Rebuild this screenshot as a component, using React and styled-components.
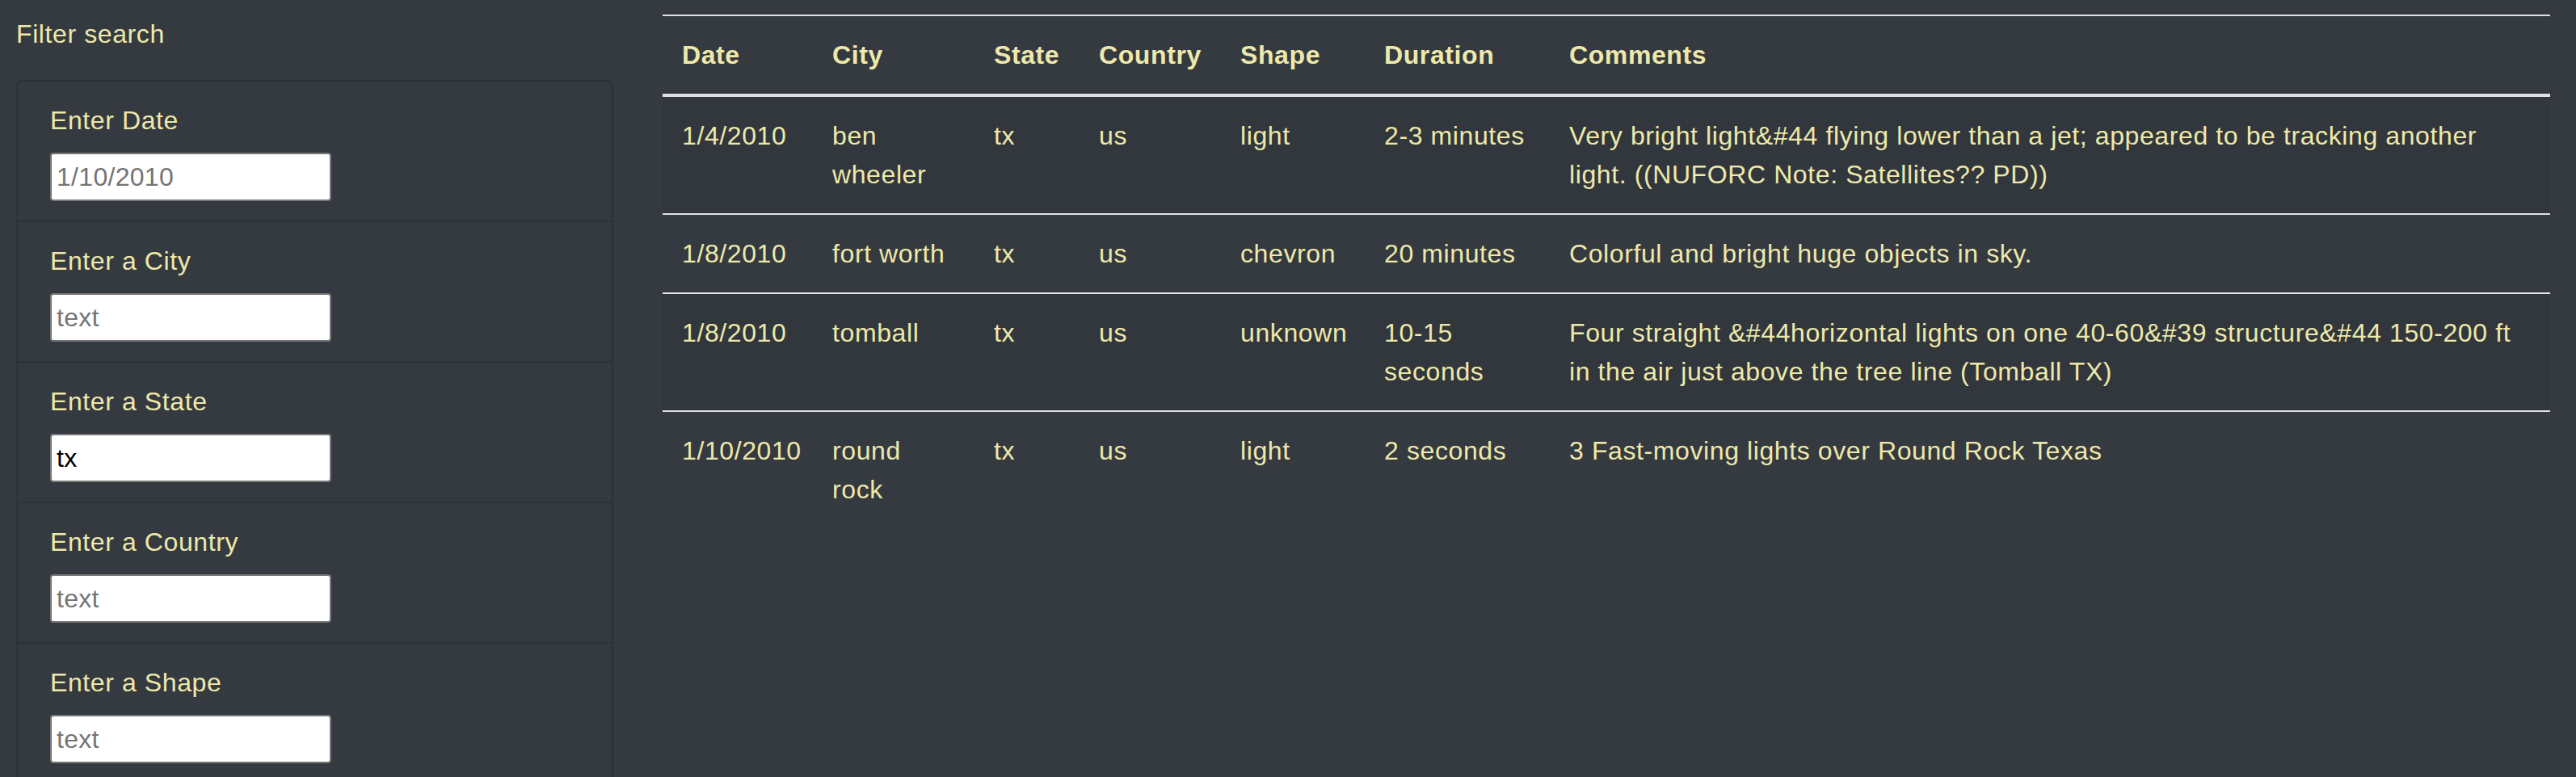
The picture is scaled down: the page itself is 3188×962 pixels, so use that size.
import React from "react";
import styled, { createGlobalStyle } from "styled-components";

const GlobalStyle = createGlobalStyle`
  html, body {
    margin: 0;
    padding: 0;
    background: #343a40;
  }
  body {
    font-family: "Liberation Sans", Arial, sans-serif;
    color: #eee8aa;
    font-size: 32px;
    line-height: 48px;
    letter-spacing: 0.6px;
  }
  * { box-sizing: border-box; }
`;

const Page = styled.div`
  display: flex;
  align-items: flex-start;
  padding-top: 18px;
  min-height: 962px;
`;

const Sidebar = styled.aside`
  width: 739px;
  margin-left: 20px;
  flex-shrink: 0;
`;

const SideTitle = styled.div`
  font-size: 32px;
  line-height: 48px;
  margin: 0 0 33px 0;
`;

const Card = styled.ul`
  list-style: none;
  margin: 0;
  padding: 0;
  border: 2px solid rgba(0, 0, 0, 0.125);
  border-radius: 8px;
`;

const Item = styled.li`
  padding: 24px 40px;
  display: flex;
  flex-direction: column;
  align-items: flex-start;
  & + & {
    border-top: 2px solid rgba(0, 0, 0, 0.125);
  }
`;

const Label = styled.label`
  display: block;
  line-height: 48px;
  margin-bottom: 16px;
`;

const Input = styled.input`
  width: 348px;
  height: 60px;
  border: 2px solid #767676;
  border-radius: 4px;
  background: #fff;
  color: #000;
  font-family: "Liberation Sans", Arial, sans-serif;
  font-size: 32px;
  letter-spacing: 0.3px;
  padding: 0 6px;
  outline: none;
  &::placeholder {
    color: #757575;
    opacity: 1;
  }
`;

const Main = styled.main`
  margin-left: 61px;
  width: 2336px;
  flex-shrink: 0;
`;

const Table = styled.table`
  width: 2336px;
  table-layout: fixed;
  border-collapse: separate;
  border-spacing: 0;
`;

const Th = styled.th`
  text-align: left;
  font-weight: bold;
  padding: 24px;
  line-height: 48px;
  vertical-align: bottom;
  border-top: 2px solid #dee2e6;
  border-bottom: 4px solid #dee2e6;
`;

const Row = styled.tr`
  background: ${(p) => (p.$striped ? "rgba(0, 0, 0, 0.05)" : "transparent")};
`;

const Td = styled.td`
  padding: 24px;
  line-height: 48px;
  vertical-align: top;
  border-top: ${(p) => (p.$first ? "none" : "2px solid #dee2e6")};
`;

const columns = [
  { key: "date", label: "Date", width: 186 },
  { key: "city", label: "City", width: 200 },
  { key: "state", label: "State", width: 130 },
  { key: "country", label: "Country", width: 175 },
  { key: "shape", label: "Shape", width: 178 },
  { key: "duration", label: "Duration", width: 229 },
  { key: "comments", label: "Comments", width: 1238 },
];

const rows = [
  {
    date: "1/4/2010",
    city: "ben wheeler",
    state: "tx",
    country: "us",
    shape: "light",
    duration: "2-3 minutes",
    comments:
      "Very bright light&#44 flying lower than a jet; appeared to be tracking another light. ((NUFORC Note: Satellites?? PD))",
  },
  {
    date: "1/8/2010",
    city: "fort worth",
    state: "tx",
    country: "us",
    shape: "chevron",
    duration: "20 minutes",
    comments: "Colorful and bright huge objects in sky.",
  },
  {
    date: "1/8/2010",
    city: "tomball",
    state: "tx",
    country: "us",
    shape: "unknown",
    duration: "10-15 seconds",
    comments:
      "Four straight &#44horizontal lights on one 40-60&#39 structure&#44 150-200 ft in the air just above the tree line (Tomball TX)",
  },
  {
    date: "1/10/2010",
    city: "round rock",
    state: "tx",
    country: "us",
    shape: "light",
    duration: "2 seconds",
    comments: "3 Fast-moving lights over Round Rock Texas",
  },
];

const filters = [
  { id: "datetime", label: "Enter Date", placeholder: "1/10/2010" },
  { id: "city", label: "Enter a City", placeholder: "text" },
  { id: "state", label: "Enter a State", placeholder: "text", value: "tx" },
  { id: "country", label: "Enter a Country", placeholder: "text" },
  { id: "shape", label: "Enter a Shape", placeholder: "text" },
];

export default function App() {
  return (
    <>
      <GlobalStyle />
      <Page>
        <Sidebar>
          <SideTitle>Filter search</SideTitle>
          <Card>
            {filters.map((f) => (
              <Item key={f.id}>
                <Label htmlFor={f.id}>{f.label}</Label>
                <Input
                  id={f.id}
                  type="text"
                  placeholder={f.placeholder}
                  defaultValue={f.value || ""}
                />
              </Item>
            ))}
          </Card>
        </Sidebar>
        <Main>
          <Table>
            <colgroup>
              {columns.map((c) => (
                <col key={c.key} style={{ width: c.width }} />
              ))}
            </colgroup>
            <thead>
              <tr>
                {columns.map((c) => (
                  <Th key={c.key}>{c.label}</Th>
                ))}
              </tr>
            </thead>
            <tbody>
              {rows.map((r, i) => (
                <Row key={i} $striped={i % 2 === 0}>
                  {columns.map((c) => (
                    <Td key={c.key} $first={i === 0}>
                      {r[c.key]}
                    </Td>
                  ))}
                </Row>
              ))}
            </tbody>
          </Table>
        </Main>
      </Page>
    </>
  );
}
